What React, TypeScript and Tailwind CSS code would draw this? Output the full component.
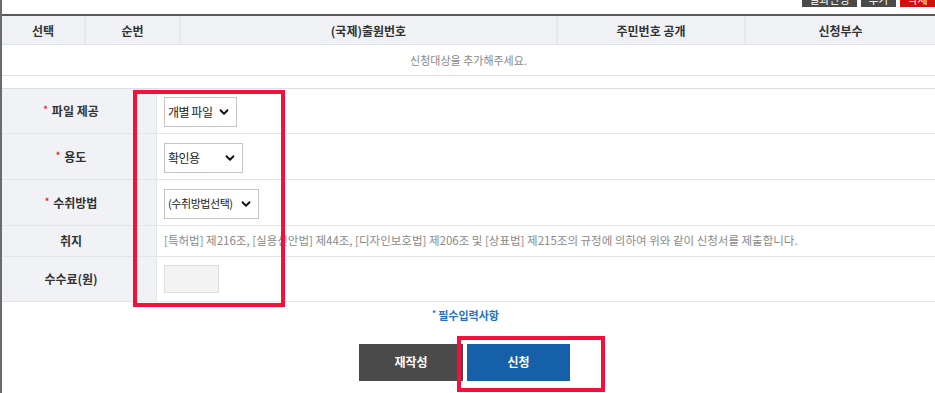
import { ChevronDown } from "lucide-react";

const font = {
  fontFamily: '"Noto Sans CJK KR", "Noto Sans", sans-serif',
};

const Select = ({ label, width, small }: { label: string; width: string; small?: boolean }) => (
  <div
    className={`${width} h-[30px] border border-[#c4c4c4] bg-white flex items-center justify-between pl-[3px] pr-[5px] ${small ? "text-[11px]" : "text-[12px]"} text-[#222] whitespace-nowrap`}
  >
    <span className="leading-none tracking-[-0.04em]">{label}</span>
    <ChevronDown size={14} strokeWidth={3.2} className="text-[#111] shrink-0" />
  </div>
);

const Label = ({ text, required }: { text: string; required?: boolean }) => (
  <div className="w-[155px] bg-[#f1f2f5] border-r border-[#e3e5ea] flex items-center justify-center pr-[16px] text-[12px] font-bold text-[#333]">
    {required && <span className="text-[#e0262b] text-[9px] mr-[4px] -mt-[2px]">*</span>}
    {text}
  </div>
);

export default function App() {
  return (
    <div
      className="relative w-[935px] h-[393px] overflow-hidden bg-white border-l-2 border-[#6b6b6b]"
      style={font}
    >
      {/* top action buttons (cut off by the viewport) */}
      <div className="h-[14px] flex justify-end items-start gap-[4px]">
        <div className="w-[55px] h-[22px] -mt-[15px] bg-[#4a4a4a] text-white text-[11px] flex items-end justify-center">
          결과반영
        </div>
        <div className="w-[35px] h-[22px] -mt-[15px] bg-[#4a4a4a] text-white text-[11px] flex items-end justify-center">
          추가
        </div>
        <div className="w-[35px] h-[22px] -mt-[15px] bg-[#d40d0d] text-white text-[11px] flex items-end justify-center">
          삭제
        </div>
      </div>

      {/* list table */}
      <div className="border-t-[2px] border-[#5a5a5a]">
        <div className="grid grid-cols-[84px_95px_377px_188px_1fr] h-[29px] bg-[#f0f1f4] border-b border-[#dfe2e8] text-[12px] font-bold text-[#333]">
          {["선택", "순번", "(국제)출원번호", "주민번호 공개", "신청부수"].map((h, i) => (
            <div
              key={h}
              className={`flex items-center justify-center pt-[1px] ${i < 4 ? "border-r-2 border-[#e6e8ec]" : ""}`}
            >
              {h}
            </div>
          ))}
        </div>
        <div className="h-[31px] flex items-center justify-center border-b border-[#dcdfe5] text-[11px] text-[#888]">
          신청대상을 추가해주세요.
        </div>
      </div>

      <div className="h-[12px]" />

      {/* form table */}
      <div className="border-t border-[#dcdfe5]">
        <div className="flex h-[45px] border-b border-[#e3e5ea]">
          <Label text="파일 제공" required />
          <div className="flex-1 flex items-center pl-[7px] pt-[2px]">
            <Select label="개별 파일" width="w-[73px]" />
          </div>
        </div>
        <div className="flex h-[46px] border-b border-[#e3e5ea]">
          <Label text="용도" required />
          <div className="flex-1 flex items-center pl-[7px] pt-[2px]">
            <Select label="확인용" width="w-[79px]" />
          </div>
        </div>
        <div className="flex h-[46px] border-b border-[#e3e5ea]">
          <Label text="수취방법" required />
          <div className="flex-1 flex items-center pl-[7px] pt-[2px]">
            <Select label="(수취방법선택)" width="w-[95px]" small />
          </div>
        </div>
        <div className="flex h-[31px] border-b border-[#e3e5ea]">
          <Label text="취지" />
          <div className="flex-1 flex items-center pl-[7px] text-[11.5px] text-[#8a8a8a] whitespace-nowrap">
            [특허법] 제216조, [실용신안법] 제44조, [디자인보호법] 제206조 및 [상표법] 제215조의 규정에 의하여 위와 같이 신청서를 제출합니다.
          </div>
        </div>
        <div className="flex h-[45px] border-b border-[#e3e5ea]">
          <Label text="수수료(원)" />
          <div className="flex-1 flex items-center pl-[7px]">
            <div className="w-[55px] h-[28px] bg-[#f3f3f3] border border-[#dedede]" />
          </div>
        </div>
      </div>

      <div className="mt-[5px] text-center text-[11px] font-bold text-[#1d73c6] pr-[6px]">
        <span className="text-[8px] align-top mr-[2px]">*</span>필수입력사항
      </div>

      <div className="mt-[20px] flex justify-center gap-[4px] pr-[8px]">
        <div className="w-[104px] h-[37px] bg-[#4a4a4a] text-white text-[12px] font-bold flex items-center justify-center">
          재작성
        </div>
        <div className="w-[103px] h-[37px] bg-[#1560a8] text-white text-[12px] font-bold flex items-center justify-center">
          신청
        </div>
      </div>

      {/* red highlight annotations */}
      <div className="absolute left-[131px] top-[90px] w-[152px] h-[217px] border-[4px] border-[#f5103c] pointer-events-none" />
      <div className="absolute left-[455px] top-[336px] w-[148px] h-[56px] border-[4px] border-[#f5103c] pointer-events-none" />
    </div>
  );
}
